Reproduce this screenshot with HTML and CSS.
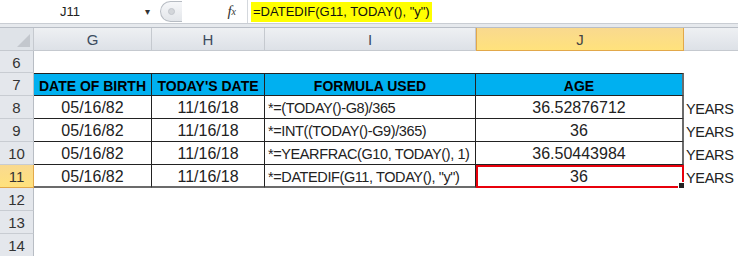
FILE: index.html
```html
<!DOCTYPE html>
<html lang="en">
<head>
    <meta charset="UTF-8">
    <title>DATEDIF age</title>
    <link rel="stylesheet" href="styles.css">
</head>
<body>
    <div class="formula-bar">
        <div class="name-box">
            <span class="name">J11</span>
            <span class="drop">&#9662;</span>
        </div>
        <div class="pill"><span class="dot"></span></div>
        <div class="fx">f<sub>x</sub></div>
        <div class="formula"><span class="hl">=DATEDIF(G11, TODAY(), "y")</span></div>
    </div>

    <div class="sheet">
        <div class="corner"></div>
        <div class="col-head">G</div>
        <div class="col-head">H</div>
        <div class="col-head">I</div>
        <div class="col-head active">J</div>
        <div class="col-head last"></div>

        <div class="row-head">6</div>
        <div class="cell"></div><div class="cell"></div><div class="cell"></div><div class="cell"></div><div class="cell"></div>

        <div class="row-head">7</div>
        <div class="cell t th">DATE OF BIRTH</div>
        <div class="cell t th">TODAY'S DATE</div>
        <div class="cell t th">FORMULA USED</div>
        <div class="cell t th right">AGE</div>
        <div class="cell"></div>

        <div class="row-head">8</div>
        <div class="cell t">05/16/82</div>
        <div class="cell t">11/16/18</div>
        <div class="cell t left">*=(TODAY()-G8)/365</div>
        <div class="cell t right">36.52876712</div>
        <div class="cell unit">YEARS</div>

        <div class="row-head">9</div>
        <div class="cell t">05/16/82</div>
        <div class="cell t">11/16/18</div>
        <div class="cell t left">*=INT((TODAY()-G9)/365)</div>
        <div class="cell t right">36</div>
        <div class="cell unit">YEARS</div>

        <div class="row-head">10</div>
        <div class="cell t">05/16/82</div>
        <div class="cell t">11/16/18</div>
        <div class="cell t left">*=YEARFRAC(G10, TODAY(), 1)</div>
        <div class="cell t right">36.50443984</div>
        <div class="cell unit">YEARS</div>

        <div class="row-head active">11</div>
        <div class="cell t bottom">05/16/82</div>
        <div class="cell t bottom">11/16/18</div>
        <div class="cell t left bottom">*=DATEDIF(G11, TODAY(), "y")</div>
        <div class="cell t right bottom selected">36</div>
        <div class="cell unit">YEARS</div>

        <div class="row-head">12</div>
        <div class="cell"></div><div class="cell"></div><div class="cell"></div><div class="cell"></div><div class="cell"></div>

        <div class="row-head">13</div>
        <div class="cell"></div><div class="cell"></div><div class="cell"></div><div class="cell"></div><div class="cell"></div>

        <div class="row-head">14</div>
        <div class="cell"></div><div class="cell"></div><div class="cell"></div><div class="cell"></div><div class="cell"></div>
    </div>
</body>
</html>
```

FILE: styles.css
```css
*{
    margin:0;
    padding:0;
    box-sizing: border-box;
}
body{
    background:#fff;
    font-family: 'Liberation Sans', Arial, sans-serif;
    overflow:hidden;
    width:738px;
    height:256px;
}

/* formula bar */
.formula-bar{
    display:flex;
    height:28px;
    background:#fff;
    border-bottom:1px solid #b9bec6;
    box-shadow: inset 0 -3px 0 #e6e9ed, inset 0 -4px 0 #c9cdd3;
    padding-bottom:4px;
}
.name-box{
    width:158px;
    display:flex;
    align-items:center;
    font-size:13px;
    color:#222;
}
.name{
    flex:1;
    text-align:center;
    padding-left:4px;
}
.drop{
    font-size:10px;
    color:#333;
    width:22px;
    text-align:center;
}
.pill{
    width:22px;
    margin:1px 0 1px 2px;
    border:1px solid #b7bcc3;
    border-right:0;
    border-radius:12px 0 0 12px;
    background:linear-gradient(#f6f7f9, #e3e6ea);
    display:flex;
    align-items:center;
    justify-content:center;
}
.dot{
    width:7px;
    height:7px;
    border-radius:50%;
    background:#d3d6da;
    border:1px solid #c2c6cc;
}
.fx{
    width:66px;
    display:flex;
    align-items:center;
    justify-content:flex-end;
    padding-right:11px;
    font-family:'Liberation Serif', serif;
    font-style:italic;
    font-size:15px;
    color:#333;
    border-right:1px solid #d4d8dd;
}
.fx sub{
    font-size:10px;
    vertical-align:-1px;
}
.formula{
    flex:1;
    display:flex;
    align-items:center;
    padding-left:3px;
    font-size:13px;
    color:#111;
}
.hl{
    background:#ffff00;
    padding:2px 2px 3px 2px;
    line-height:15px;
}

/* grid */
.sheet{
    display:grid;
    grid-template-columns: 34px 118px 113px 211px 208px 1fr;
    grid-template-rows: 23px 22px;
    grid-auto-rows: 23px;
}
.corner{
    background:#dfe3e8;
    border-right:1px solid #c5c9cf;
    border-bottom:1px solid #c5c9cf;
    position:relative;
}
.corner::after{
    content:"";
    position:absolute;
    right:3px;
    bottom:3px;
    border-style:solid;
    border-width:0 0 13px 13px;
    border-color:transparent transparent #c3c7cd transparent;
}
.col-head{
    background:linear-gradient(#eef0f3, #dde1e7);
    border-right:1px solid #c5c9cf;
    border-bottom:1px solid #c5c9cf;
    display:flex;
    align-items:center;
    justify-content:center;
    font-size:15px;
    color:#3c4b5e;
}
.col-head.last{
    border-right:0;
}
.col-head.active{
    background:linear-gradient(#f9d98f, #ffe27c);
    border:1px solid #e2a84a;
    border-top:0;
    color:#444;
}
.row-head{
    background:#e4e7ec;
    border-right:1px solid #b8bdc4;
    border-bottom:1px solid #c8ccd2;
    display:flex;
    align-items:center;
    justify-content:center;
    font-size:15px;
    color:#333;
    padding-top:1px;
}
.row-head.active{
    background:linear-gradient(#f9d98f, #ffe27c);
    border-right:1px solid #e2a84a;
    border-bottom:1px solid #e2a84a;
}
.cell{
    display:flex;
    align-items:center;
    justify-content:center;
    font-size:16px;
    color:#222;
    white-space:nowrap;
    overflow:hidden;
    padding-top:2px;
}
.cell.left{
    justify-content:flex-start;
    padding-left:3px;
    font-size:14.5px;
    letter-spacing:-0.4px;
}
.cell.unit{
    justify-content:flex-start;
    padding-left:2px;
    font-size:14.5px;
    letter-spacing:-0.3px;
}
.cell.t{
    border-right:1px solid #222;
    border-bottom:1px solid #222;
}
.cell.right{
    border-right:2px solid #6b6b6b;
}
.cell.bottom{
    border-bottom:2px solid #6b6b6b;
}
.th{
    background:#00b0f0;
    font-weight:bold;
    font-size:14px;
    color:#000;
    border-top:1px solid #222;
}
.selected{
    position:relative;
    overflow:visible;
    outline:2px solid #e8000b;
    outline-offset:-2px;
}
.selected::after{
    content:"";
    position:absolute;
    right:-3px;
    bottom:-3px;
    width:5px;
    height:5px;
    background:#222;
    border:1px solid #fff;
}
```
